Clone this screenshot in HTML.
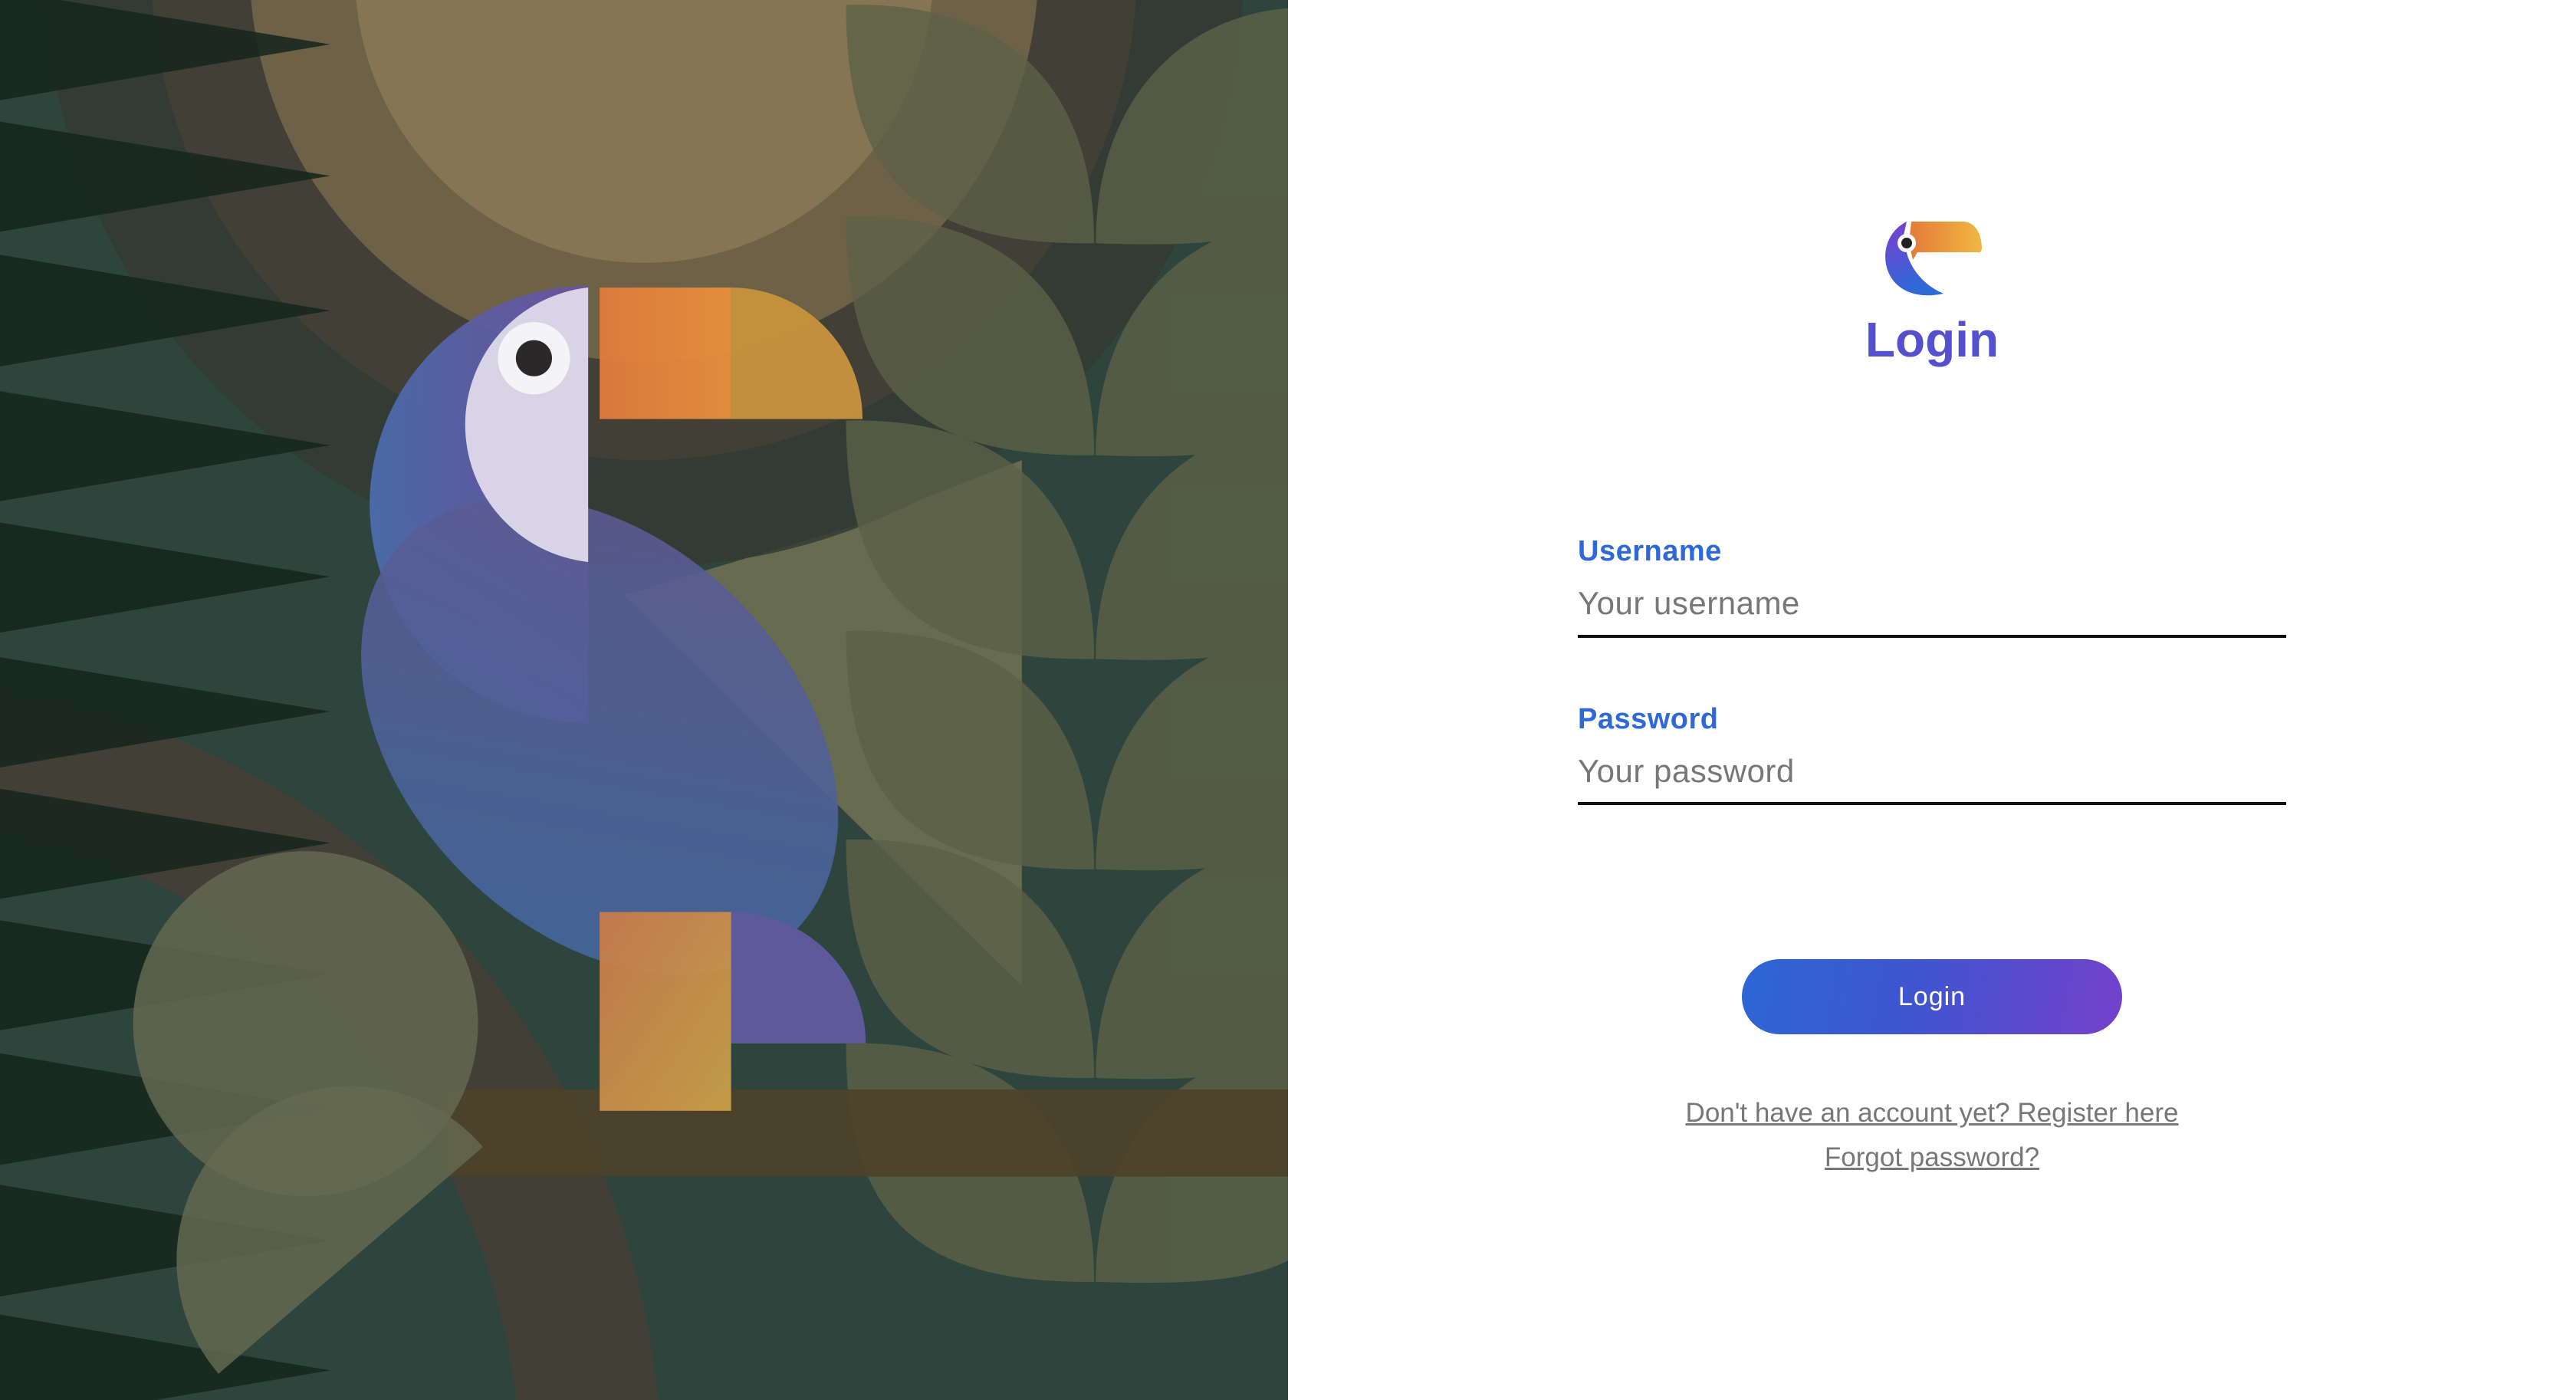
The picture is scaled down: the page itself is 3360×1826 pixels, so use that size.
<!DOCTYPE html>
<html><head><meta charset="utf-8"><style>
html,body{margin:0;padding:0;width:3360px;height:1826px;overflow:hidden;background:#fff;font-family:"Liberation Sans",sans-serif;position:relative}
#left{position:absolute;left:0;top:0;width:1680px;height:1826px;display:block}
.abs{position:absolute}
.lbl{left:2058px;font-weight:bold;font-size:38px;color:#2f68d8;letter-spacing:0.5px}
.ph{left:2058px;font-size:42px;color:#777;letter-spacing:0.5px}
.line{left:2058px;width:924px;height:4px;background:#111}
.lnk{left:2000px;width:1040px;text-align:center;font-size:35px;color:#777;text-decoration:underline;line-height:44px}
</style></head><body>
<svg id="left" viewBox="0 0 784 852" preserveAspectRatio="none" xmlns="http://www.w3.org/2000/svg">
<defs>
<linearGradient id="hb" x1="0" x2="1"><stop offset="0" stop-color="#4a6cab"/><stop offset="1" stop-color="#6c50a0"/></linearGradient>
<linearGradient id="bd" x1="0" y1="0" x2="1" y2="1"><stop offset="0" stop-color="#605890"/><stop offset="1" stop-color="#3f6aa0"/></linearGradient>
<linearGradient id="bk" x1="0" x2="1"><stop offset="0" stop-color="#e07c3c"/><stop offset="1" stop-color="#e8903c"/></linearGradient>
<linearGradient id="ft" x1="0" y1="0" x2="1" y2="1"><stop offset="0" stop-color="#c87a4a"/><stop offset="1" stop-color="#c8a048"/></linearGradient>
</defs>
<rect width="784" height="852" fill="#2e453d"/>
<polygon points="380,362 520,320 622,280 622,600" fill="#676b50"/>
<ellipse cx="-60" cy="900" rx="420" ry="440" fill="none" stroke="#413f36" stroke-width="86"/>
<circle cx="392" cy="-20" r="365" fill="#343b32" opacity="0.85"/>
<circle cx="392" cy="-20" r="300" fill="#413f36"/>
<circle cx="392" cy="-20" r="240" fill="#6d6148"/>
<circle cx="392" cy="-16" r="176" fill="#857552"/>
<g fill="#15261c" opacity="0.85">
<polygon points="0,-6 201,27 0,61"/><polygon points="0,74 201,107 0,141"/><polygon points="0,155 201,189 0,223"/>
<polygon points="0,238 201,271 0,305"/><polygon points="0,318 201,351 0,385"/><polygon points="0,400 201,433 0,467"/>
<polygon points="0,480 201,513 0,547"/><polygon points="0,560 201,593 0,627"/><polygon points="0,641 201,675 0,709"/>
<polygon points="0,721 201,755 0,789"/><polygon points="0,800 201,834 0,868"/>
</g>
<g fill="#5d6147" opacity="0.8">
<path id="lf" d="M515,3 C515,100 550,150 666,148 C666,60 620,0 515,3Z"/>
<path d="M667,148 C667,60 720,10 784,5 L784,135 C760,148 720,150 667,148Z"/>
<use href="#lf" y="129"/><use href="#lf" y="253"/><use href="#lf" y="381"/><use href="#lf" y="508"/><use href="#lf" y="632"/>
<path d="M667,277 C667,190 720,140 784,134 L784,264 C760,277 720,279 667,277Z"/>
<path d="M667,401 C667,314 720,264 784,258 L784,388 C760,401 720,403 667,401Z"/>
<path d="M667,529 C667,442 720,392 784,386 L784,516 C760,529 720,531 667,529Z"/>
<path d="M667,656 C667,569 720,519 784,513 L784,643 C760,656 720,658 667,656Z"/>
<path d="M667,780 C667,693 720,643 784,637 L784,767 C760,780 720,782 667,780Z"/>
</g>
<rect x="270" y="663" width="514" height="53" fill="#4e4128" opacity="0.9"/>
<path d="M358,174 A133,133 0 0 0 358,440Z" fill="url(#hb)" opacity="0.95"/>
<ellipse cx="365" cy="448" rx="168" ry="118" transform="rotate(45 365 448)" fill="url(#bd)" opacity="0.9"/>
<path d="M358,175 A84,84 0 0 0 358,342Z" fill="#d8d4e6"/>
<circle cx="325" cy="218" r="22" fill="#f4f4f6"/>
<circle cx="325" cy="218" r="11" fill="#2a2828"/>
<rect x="365" y="175" width="80" height="80" fill="url(#bk)" opacity="0.95"/>
<path d="M445,175 A80,80 0 0 1 525,255 L445,255Z" fill="#c8943e" opacity="0.95"/>
<path d="M445,555 A82,80 0 0 1 527,635 L445,635Z" fill="#5e5a9a"/>
<rect x="365" y="555" width="80" height="121" fill="url(#ft)" opacity="0.95"/>
<circle cx="186" cy="623" r="105" fill="#646850" opacity="0.85"/>
<path d="M294,698 A105,105 0 1 0 133,836Z" fill="#646850" opacity="0.85"/>
</svg>
<svg class="abs" style="left:2455px;top:287px" width="132" height="104" viewBox="0 0 132 104">
<defs>
<linearGradient id="lg1" x1="0" y1="0" x2="0.3" y2="1"><stop offset="0" stop-color="#7a3ed0"/><stop offset="1" stop-color="#2d6ad6"/></linearGradient>
<linearGradient id="lg2" x1="0" x2="1"><stop offset="0" stop-color="#e37a38"/><stop offset="1" stop-color="#f0b842"/></linearGradient>
</defs>
<path d="M32,2 C8,14 0,40 6,62 C14,90 42,104 80,96 C52,84 34,60 30,34 L28,20 Z" fill="url(#lg1)"/>
<path d="M38,2 L105,2 C120,2 130,16 130,38 L128,42 L46,42 L40,52 L35,30 Z" fill="url(#lg2)"/>
<circle cx="32" cy="30" r="12" fill="#fff"/>
<circle cx="32" cy="30" r="7" fill="#222"/>
</svg>
<div class="abs" style="left:2420px;top:406px;width:200px;text-align:center;font-weight:bold;font-size:64px;color:#5550d0">Login</div>
<div class="abs lbl" style="top:698px">Username</div>
<div class="abs ph" style="top:763px">Your username</div>
<div class="abs line" style="top:828px"></div>
<div class="abs lbl" style="top:917px">Password</div>
<div class="abs ph" style="top:982px">Your password</div>
<div class="abs line" style="top:1046px"></div>
<div class="abs" style="left:2272px;top:1251px;width:496px;height:98px;border-radius:49px;background:linear-gradient(100deg,#2c66d4,#3f55d0 45%,#7440cc);color:#fff;font-size:34px;text-align:center;line-height:98px;letter-spacing:1px">Login</div>
<div class="abs lnk" style="top:1430px">Don't have an account yet? Register here</div>
<div class="abs lnk" style="top:1488px">Forgot password?</div>
</body></html>
